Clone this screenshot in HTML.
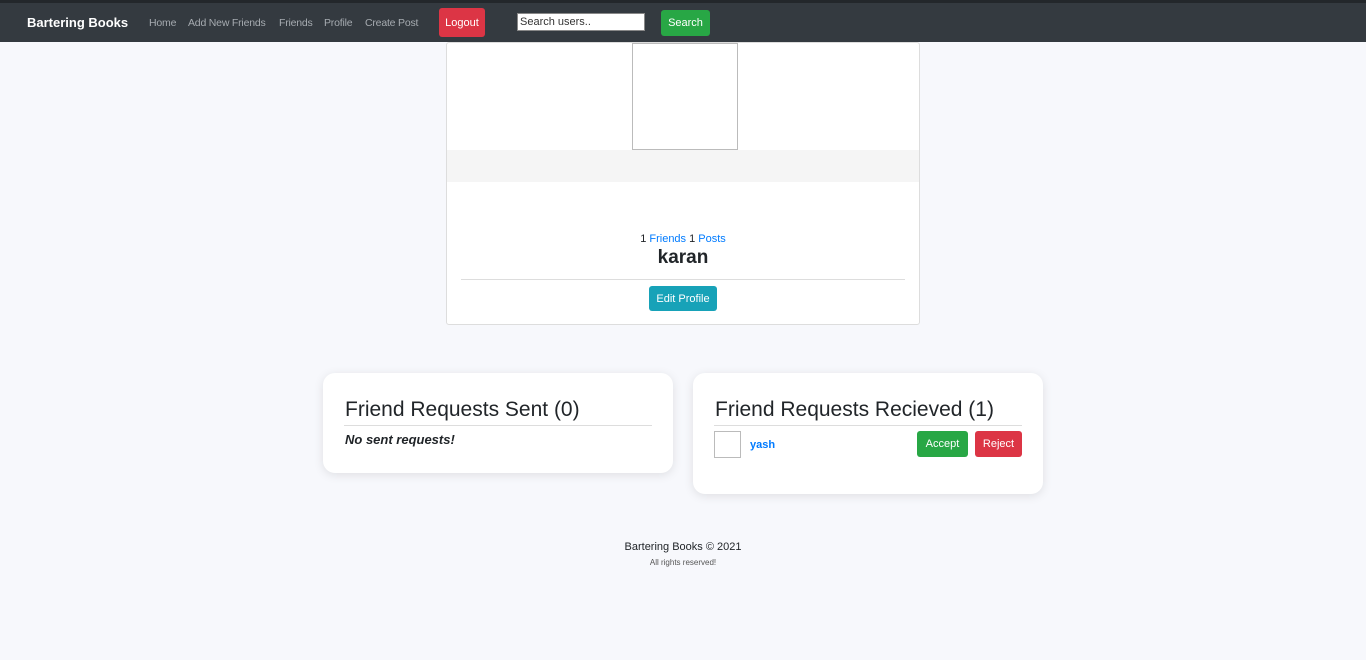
<!DOCTYPE html>
<html><head><style>
*{box-sizing:border-box;margin:0;padding:0}
body{width:1366px;height:660px;background:#f7f8fc;font-family:"Liberation Sans",sans-serif;color:#212529;position:relative;overflow:hidden}
.nav{position:absolute;left:0;top:0;width:1366px;height:42px;background:#343a40;border-top:3px solid #23272b}
.a{position:absolute;font-size:10.5px;color:#a6abb0;top:14px;letter-spacing:-0.2px}
.brand{position:absolute;left:27px;top:12px;color:#fff;font-weight:bold;font-size:13px}
.btn{position:absolute;color:#fff;font-size:11px;border-radius:3px;display:flex;align-items:center;justify-content:center}
.card{position:absolute;background:#fff}
.sh{border-radius:12px;box-shadow:0 2px 10px rgba(0,0,0,.1)}
h2{position:absolute;font-size:21px;font-weight:normal;color:#212529}
</style></head><body>
<div class="nav">
<div class="brand">Bartering Books</div>
<div class="a" style="left:149px">Home</div>
<div class="a" style="left:188px">Add New Friends</div>
<div class="a" style="left:279px">Friends</div>
<div class="a" style="left:324px">Profile</div>
<div class="a" style="left:365px">Create Post</div>
<div class="btn" style="left:439px;top:5px;width:46px;height:29px;background:#dc3545">Logout</div>
<div style="position:absolute;left:517px;top:10px;width:128px;height:18px;background:#fff;border:1px solid #888;font-size:11px;color:#333;padding:2px 2px">Search users..</div>
<div class="btn" style="left:661px;top:7px;width:49px;height:26px;background:#28a745">Search</div>
</div>
<div class="card" style="left:446px;top:42px;width:474px;height:283px;border:1px solid #ddd;border-radius:3px">
<div style="position:absolute;left:185px;top:0;width:106px;height:107px;border:1px solid #bbb"></div>
<div style="position:absolute;left:0;top:107px;width:472px;height:32px;background:#f5f5f5"></div>
<div style="position:absolute;left:0;top:190px;width:472px;text-align:center;font-size:11px">1 <span style="color:#007bff">Friends</span> 1 <span style="color:#007bff">Posts</span></div>
<div style="position:absolute;left:0;top:204px;width:472px;text-align:center;font-size:19px;font-weight:bold">karan</div>
<div style="position:absolute;left:14px;top:236px;width:444px;border-top:1px solid #ddd"></div>
<div class="btn" style="left:202px;top:243px;width:68px;height:25px;background:#17a2b8">Edit Profile</div>
</div>
<div class="card sh" style="left:323px;top:373px;width:350px;height:100px">
<h2 style="left:22px;top:25px">Friend Requests Sent (0)</h2>
<div style="position:absolute;left:21px;top:52px;width:308px;border-top:1px solid #ddd"></div>
<div style="position:absolute;left:22px;top:59px;font-size:13px;font-style:italic;font-weight:bold">No sent requests!</div>
</div>
<div class="card sh" style="left:693px;top:373px;width:350px;height:121px">
<h2 style="left:22px;top:25px">Friend Requests Recieved (1)</h2>
<div style="position:absolute;left:21px;top:52px;width:308px;border-top:1px solid #ddd"></div>
<div style="position:absolute;left:21px;top:58px;width:27px;height:27px;border:1px solid #bbb"></div>
<div style="position:absolute;left:57px;top:66px;font-size:11px;font-weight:bold;color:#007bff">yash</div>
<div class="btn" style="left:224px;top:58px;width:51px;height:26px;background:#28a745">Accept</div>
<div class="btn" style="left:282px;top:58px;width:47px;height:26px;background:#dc3545">Reject</div>
</div>
<div style="position:absolute;left:0;top:541px;width:1366px;text-align:center;font-size:11px">Bartering Books © 2021</div>
<div style="position:absolute;left:0;top:558px;width:1366px;text-align:center;font-size:8px;color:#555">All rights reserved!</div>
</body></html>
